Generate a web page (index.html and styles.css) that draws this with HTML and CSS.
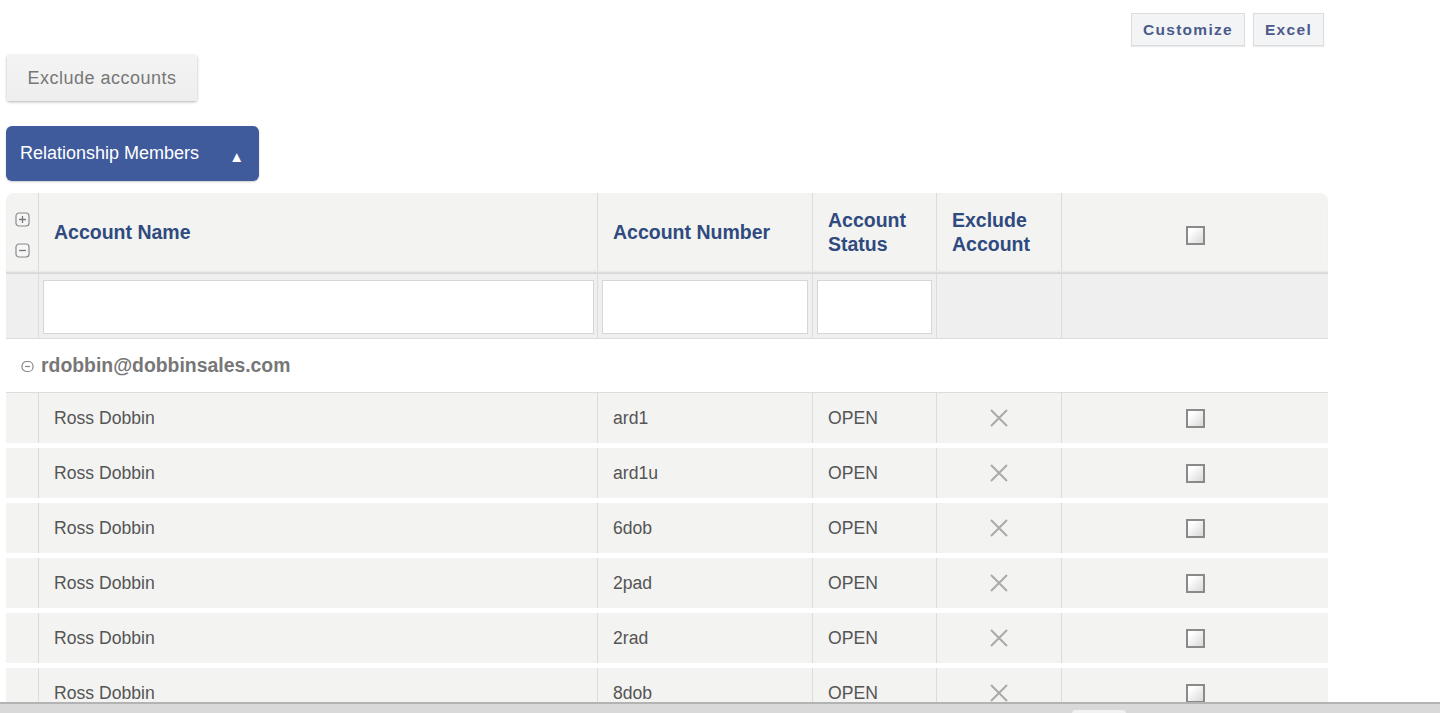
FILE: index.html
```html
<!DOCTYPE html>
<html lang="en">
<head>
<meta charset="utf-8">
<title>Relationship Members</title>
<link rel="stylesheet" href="styles.css">
</head>
<body>
<div class="page">
  <div class="toolbar">
    <button class="tool-btn tool-customize">Customize</button>
    <button class="tool-btn tool-excel">Excel</button>
  </div>
  <button class="exclude-btn">Exclude accounts</button>
  <button class="section-btn">
    <span>Relationship Members</span>
    <span class="tri">&#9650;</span>
  </button>

  <div class="grid">
    <div class="row head">
      <div class="cell c0 expanders">
        <svg width="15" height="15" viewBox="0 0 15 15"><rect x="1" y="1" width="13" height="13" rx="3" fill="#f6f6f6" stroke="#8a8a8a" stroke-width="1.2"/><path d="M4 7.5h7M7.5 4v7" stroke="#777" stroke-width="1.3"/></svg>
        <svg width="15" height="15" viewBox="0 0 15 15"><rect x="1" y="1" width="13" height="13" rx="3" fill="#f6f6f6" stroke="#8a8a8a" stroke-width="1.2"/><path d="M4 7.5h7" stroke="#777" stroke-width="1.3"/></svg>
      </div>
      <div class="cell c1">Account Name</div>
      <div class="cell c2">Account Number</div>
      <div class="cell c3">Account<br>Status</div>
      <div class="cell c4">Exclude<br>Account</div>
      <div class="cell c5 center"><span class="check head-check"></span></div>
    </div>
    <div class="row filter">
      <div class="cell c0"></div>
      <div class="cell c1"><input class="filter-input" type="text"></div>
      <div class="cell c2"><input class="filter-input" type="text"></div>
      <div class="cell c3"><input class="filter-input" type="text"></div>
      <div class="cell c4"></div>
      <div class="cell c5"></div>
    </div>
    <div class="group">
      <svg width="13" height="13" viewBox="0 0 13 13"><rect x="1" y="1.5" width="11" height="10" rx="4.5" fill="none" stroke="#888" stroke-width="1.2"/><path d="M4 6.5h5" stroke="#888" stroke-width="1.2"/></svg>
      <span>rdobbin@dobbinsales.com</span>
    </div>

    <div class="row data">
      <div class="cell c0"></div><div class="cell c1">Ross Dobbin</div><div class="cell c2">ard1</div><div class="cell c3">OPEN</div>
      <div class="cell c4 center"><svg class="x" width="20" height="20" viewBox="0 0 20 20"><path d="M2 2L18 18M18 2L2 18" stroke="#a9a9a9" stroke-width="2"/></svg></div>
      <div class="cell c5 center"><span class="check"></span></div>
    </div>
    <div class="row data">
      <div class="cell c0"></div><div class="cell c1">Ross Dobbin</div><div class="cell c2">ard1u</div><div class="cell c3">OPEN</div>
      <div class="cell c4 center"><svg class="x" width="20" height="20" viewBox="0 0 20 20"><path d="M2 2L18 18M18 2L2 18" stroke="#a9a9a9" stroke-width="2"/></svg></div>
      <div class="cell c5 center"><span class="check"></span></div>
    </div>
    <div class="row data">
      <div class="cell c0"></div><div class="cell c1">Ross Dobbin</div><div class="cell c2">6dob</div><div class="cell c3">OPEN</div>
      <div class="cell c4 center"><svg class="x" width="20" height="20" viewBox="0 0 20 20"><path d="M2 2L18 18M18 2L2 18" stroke="#a9a9a9" stroke-width="2"/></svg></div>
      <div class="cell c5 center"><span class="check"></span></div>
    </div>
    <div class="row data">
      <div class="cell c0"></div><div class="cell c1">Ross Dobbin</div><div class="cell c2">2pad</div><div class="cell c3">OPEN</div>
      <div class="cell c4 center"><svg class="x" width="20" height="20" viewBox="0 0 20 20"><path d="M2 2L18 18M18 2L2 18" stroke="#a9a9a9" stroke-width="2"/></svg></div>
      <div class="cell c5 center"><span class="check"></span></div>
    </div>
    <div class="row data">
      <div class="cell c0"></div><div class="cell c1">Ross Dobbin</div><div class="cell c2">2rad</div><div class="cell c3">OPEN</div>
      <div class="cell c4 center"><svg class="x" width="20" height="20" viewBox="0 0 20 20"><path d="M2 2L18 18M18 2L2 18" stroke="#a9a9a9" stroke-width="2"/></svg></div>
      <div class="cell c5 center"><span class="check"></span></div>
    </div>
    <div class="row data">
      <div class="cell c0"></div><div class="cell c1">Ross Dobbin</div><div class="cell c2">8dob</div><div class="cell c3">OPEN</div>
      <div class="cell c4 center"><svg class="x" width="20" height="20" viewBox="0 0 20 20"><path d="M2 2L18 18M18 2L2 18" stroke="#a9a9a9" stroke-width="2"/></svg></div>
      <div class="cell c5 center"><span class="check"></span></div>
    </div>
  </div>
</div>
<div class="bottom-bar"><div class="thumb"></div></div>
</body>
</html>
```

FILE: styles.css
```css
html, body {
  margin: 0;
  padding: 0;
  height: 100%;
  overflow: hidden;
  background: #ffffff;
}
body {
  font-family: "Liberation Sans", Arial, sans-serif;
  color: #555;
}
.page {
  padding: 13px 0 0 6px;
}
.toolbar {
  display: flex;
  justify-content: flex-end;
  gap: 8px;
  width: 1318px;
}
.tool-btn {
  height: 33px;
  border: 1px solid #dcdcdc;
  background: #f3f4f6;
  color: #4b5a8b;
  font-family: "Liberation Sans", Arial, sans-serif;
  font-weight: bold;
  font-size: 15.5px;
  letter-spacing: 1.3px;
  padding: 0;
  box-shadow: 0 1px 1px rgba(0,0,0,0.08);
}
.tool-customize { width: 114px; }
.tool-excel { width: 71px; }

.exclude-btn {
  display: block;
  margin: 9px 0 0 1px;
  width: 190px;
  height: 46px;
  border: none;
  border-radius: 2px;
  background: linear-gradient(#f4f4f4, #eeeeee);
  box-shadow: 0 1px 3px rgba(0,0,0,0.3);
  color: #777;
  font-family: "Liberation Sans", Arial, sans-serif;
  font-size: 18px;
  letter-spacing: 0.5px;
  padding: 0;
}
.section-btn {
  display: flex;
  align-items: center;
  justify-content: space-between;
  margin-top: 25px;
  width: 253px;
  height: 55px;
  border: none;
  border-radius: 6px;
  background: #405b9c;
  color: #fff;
  font-family: "Liberation Sans", Arial, sans-serif;
  font-size: 18px;
  padding: 0 15px 0 14px;
  box-shadow: 0 1px 2px rgba(0,0,0,0.2);
}
.section-btn .tri {
  font-size: 15px;
  margin-top: 6px;
}

.grid {
  margin-top: 12px;
  width: 1322px;
}
.row {
  display: grid;
  grid-template-columns: 32px 559px 215px 124px 125px 267px;
}
.cell {
  border-left: 1px solid #dcdcdc;
  display: flex;
  align-items: center;
  padding-left: 15px;
  box-sizing: border-box;
}
.cell.c0 {
  border-left: none;
  padding-left: 0;
}
.cell.center {
  justify-content: center;
  padding-left: 0;
}
.head {
  background: #f3f3f2;
  border-radius: 8px 8px 0 0;
  height: 81px;
  box-shadow: inset 0 -3px 2px -1px #d6d6d6;
}
.head .cell {
  color: #2f4a7e;
  font-weight: bold;
  font-size: 19.5px;
  line-height: 24px;
  height: 78px;
}
.head-check {
  margin-top: 6px;
}
.expanders {
  flex-direction: column;
  justify-content: center;
  align-items: center;
  gap: 16px;
  padding-top: 6px;
  padding-left: 0;
}
.filter {
  background: #efefef;
  height: 65px;
  border-bottom: 1px solid #dcdcdc;
  box-sizing: border-box;
}
.filter .cell {
  padding: 6px 4px 4px 4px;
  align-items: stretch;
}
.filter .cell.c1 { padding-right: 3px; }
.filter-input {
  width: 100%;
  height: 54px;
  box-sizing: border-box;
  border: 1px solid #d6d6d6;
  background: #fff;
  margin: 0;
  outline: none;
}
.group {
  display: flex;
  align-items: center;
  gap: 7px;
  height: 53px;
  padding-left: 15px;
  border-bottom: 1px solid #dcdcdc;
  color: #777;
  font-weight: bold;
  font-size: 19.4px;
}
.group svg { margin-top: 1px; }
.data {
  background: #f3f3f2;
  height: 50px;
  margin-bottom: 5px;
}
.data .cell {
  font-size: 17.6px;
  color: #555;
}
.check {
  display: block;
  width: 19px;
  height: 19px;
  box-sizing: border-box;
  border: 2px solid #8a8a8a;
  background: linear-gradient(135deg, #ffffff 20%, #d9d9d9);
}
.bottom-bar {
  position: fixed;
  left: 0;
  right: 0;
  bottom: 0;
  height: 9px;
  background: #d9d9d9;
  border-top: 2px solid #b3b3b3;
}
.thumb {
  position: absolute;
  left: 1072px;
  top: 6px;
  width: 54px;
  height: 6px;
  background: #f2f2f2;
  border-radius: 4px 4px 0 0;
}
```
